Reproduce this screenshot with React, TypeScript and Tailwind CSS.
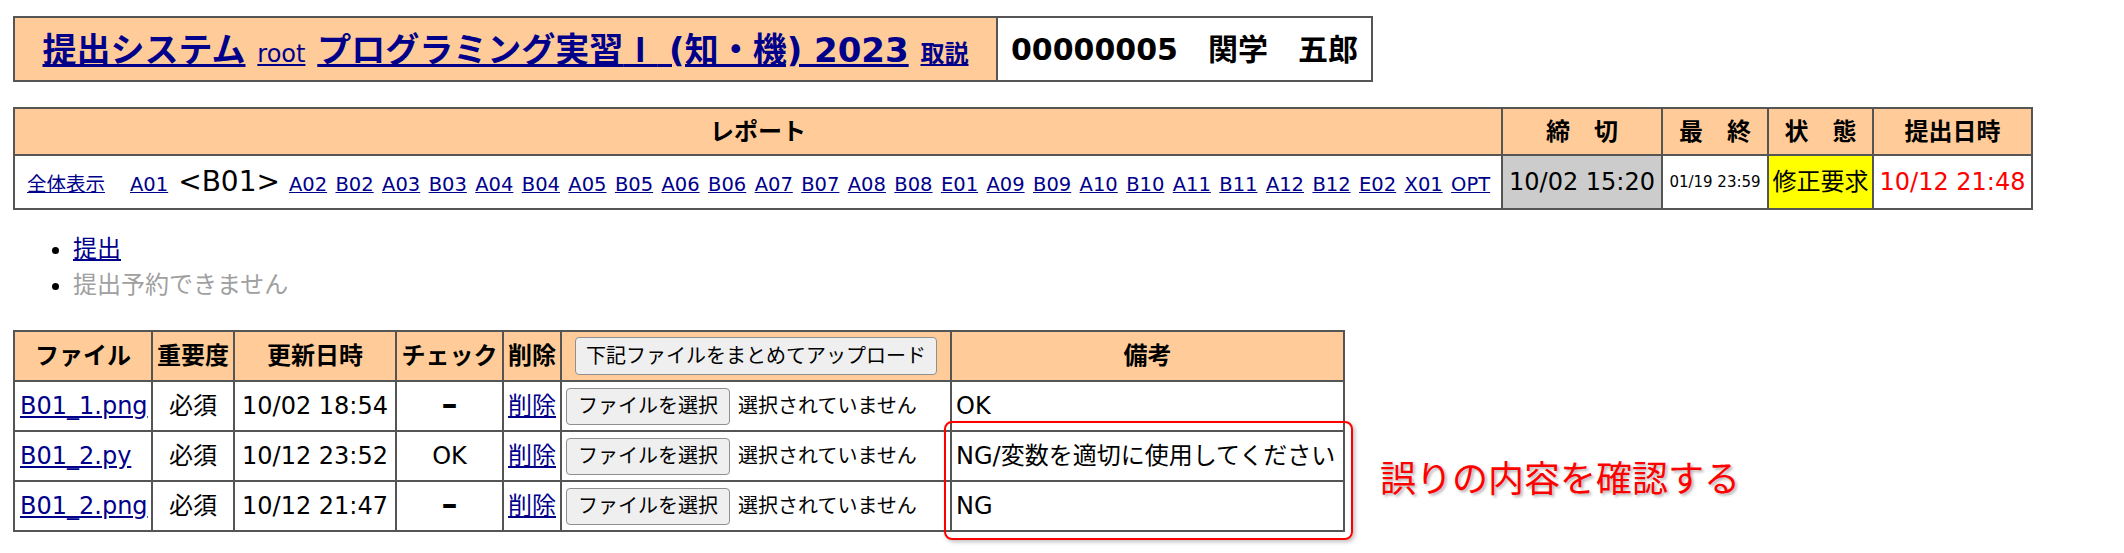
const reportLinks = [
  "A02", "B02", "A03", "B03", "A04", "B04", "A05", "B05", "A06", "B06", "A07", "B07", "A08",
  "B08", "E01", "A09", "B09", "A10", "B10", "A11", "B11", "A12", "B12", "E02", "X01", "OPT",
];

const files = [
  { name: "B01_1.png", updated: "10/02 18:54", check: "–", note: "OK" },
  { name: "B01_2.py", updated: "10/12 23:52", check: "OK", note: "NG/変数を適切に使用してください" },
  { name: "B01_2.png", updated: "10/12 21:47", check: "–", note: "NG" },
];

const link = "text-[#00008b] underline";
const cell = "border-2 border-[#555] p-0";
const head = "border-2 border-[#555] bg-[#ffcc99] p-0 text-center text-[24px] font-bold";
const btn =
  "rounded-[4px] border border-[#8f8f8f] bg-[#efefef] text-[20px] leading-none text-black";

export default function App() {
  return (
    <div className="relative min-h-[553px] bg-white pl-[13px] pt-[16px] font-['DejaVu_Sans','Noto_Sans_CJK_JP',sans-serif] text-black">
      {/* header bar */}
      <table className="w-[1360px] table-fixed border-collapse">
        <colgroup>
          <col className="w-[983px]" />
          <col />
        </colgroup>
        <tbody>
          <tr className="h-[64px]">
            <td className={`${cell} whitespace-nowrap bg-[#ffcc99] text-center text-[34px] font-bold`}>
              <a href="#" className={link}>提出システム</a>{" "}
              <a href="#" className={`${link} text-[24px] font-normal`}>root</a>{" "}
              <a href="#" className={link}>
                プログラミング実習<span className="font-['Noto_Sans_CJK_JP',sans-serif]">Ⅰ</span> (知・機) 2023
              </a>{" "}
              <a href="#" className={`${link} text-[24px]`}>取説</a>
            </td>
            <td className={`${cell} whitespace-nowrap bg-white text-center text-[30px] font-bold`}>
              00000005　関学　五郎
            </td>
          </tr>
        </tbody>
      </table>

      {/* report selector */}
      <table className="mt-[25px] w-[2020px] table-fixed border-collapse">
        <colgroup>
          <col className="w-[1488px]" />
          <col className="w-[160px]" />
          <col className="w-[106px]" />
          <col className="w-[105px]" />
          <col />
        </colgroup>
        <thead>
          <tr className="h-[47px]">
            <th className={head}>レポート</th>
            <th className={head}>締　切</th>
            <th className={head}>最　終</th>
            <th className={head}>状　態</th>
            <th className={head}>提出日時</th>
          </tr>
        </thead>
        <tbody>
          <tr className="h-[54px]">
            <td className={`${cell} pl-[12px]`}>
              <div className="flex items-baseline whitespace-nowrap text-[19.5px]">
                <a href="#" className={`${link} mr-[25px]`}>全体表示</a>
                <a href="#" className={`${link} mr-[10px]`}>A01</a>
                <span className="mr-[9px] text-[28px]">&lt;B01&gt;</span>
                <div className="flex items-baseline gap-[8.4px]">
                  {reportLinks.map((r) => (
                    <a key={r} href="#" className={link}>{r}</a>
                  ))}
                </div>
              </div>
            </td>
            <td className={`${cell} bg-[#cccccc] text-center text-[24px]`}>10/02 15:20</td>
            <td className={`${cell} text-center text-[15px]`}>01/19 23:59</td>
            <td className={`${cell} bg-[#ffff00] text-center text-[24px]`}>修正要求</td>
            <td className={`${cell} text-center text-[24px] text-[#ff0000]`}>10/12 21:48</td>
          </tr>
        </tbody>
      </table>

      <ul className="mb-[27px] mt-[21px] list-disc pl-[60px] text-[24px] leading-[36px]">
        <li>
          <a href="#" className={link}>提出</a>
        </li>
        <li>
          <span className="text-[#a0a0a0]">提出予約できません</span>
        </li>
      </ul>

      {/* uploaded files */}
      <table className="w-[1332px] table-fixed border-collapse">
        <colgroup>
          <col className="w-[138px]" />
          <col className="w-[82px]" />
          <col className="w-[162px]" />
          <col className="w-[107px]" />
          <col className="w-[58px]" />
          <col className="w-[390px]" />
          <col />
        </colgroup>
        <thead>
          <tr className="h-[50px]">
            <th className={head}>ファイル</th>
            <th className={head}>重要度</th>
            <th className={head}>更新日時</th>
            <th className={head}>チェック</th>
            <th className={head}>削除</th>
            <th className={head}>
              <button type="button" className={`${btn} h-[38px] px-[10px] font-normal`}>
                下記ファイルをまとめてアップロード
              </button>
            </th>
            <th className={head}>備考</th>
          </tr>
        </thead>
        <tbody className="text-[24px]">
          {files.map((f) => (
            <tr key={f.name} className="h-[50px]">
              <td className={`${cell} whitespace-nowrap pl-[5px]`}>
                <a href="#" className={link}>{f.name}</a>
              </td>
              <td className={`${cell} text-center`}>必須</td>
              <td className={`${cell} whitespace-nowrap text-center`}>{f.updated}</td>
              <td className={`${cell} text-center`}>
                {f.check === "–" ? (
                  <span className="text-[32px] font-bold leading-none">–</span>
                ) : (
                  f.check
                )}
              </td>
              <td className={`${cell} text-center`}>
                <a href="#" className={link}>削除</a>
              </td>
              <td className={`${cell} pl-[4px]`}>
                <div className="flex items-center gap-[8px] whitespace-nowrap">
                  <button type="button" className={`${btn} h-[37px] px-[11px]`}>ファイルを選択</button>
                  <span className="text-[20px]">選択されていません</span>
                </div>
              </td>
              <td className={`${cell} whitespace-nowrap pl-[4px]`}>{f.note}</td>
            </tr>
          ))}
        </tbody>
      </table>

      {/* callout */}
      <div className="absolute left-[944px] top-[421px] h-[119px] w-[409px] rounded-[8px] border-2 border-[#ff0000] shadow-[2px_2px_4px_rgba(0,0,0,0.25)]" />
      <div className="absolute left-[1380px] top-[458px] font-['Noto_Sans_CJK_JP',sans-serif] text-[36px] leading-[36px] text-[#ff0000] [text-shadow:2px_2px_3px_rgba(0,0,0,0.3)]">
        誤りの内容を確認する
      </div>
    </div>
  );
}
